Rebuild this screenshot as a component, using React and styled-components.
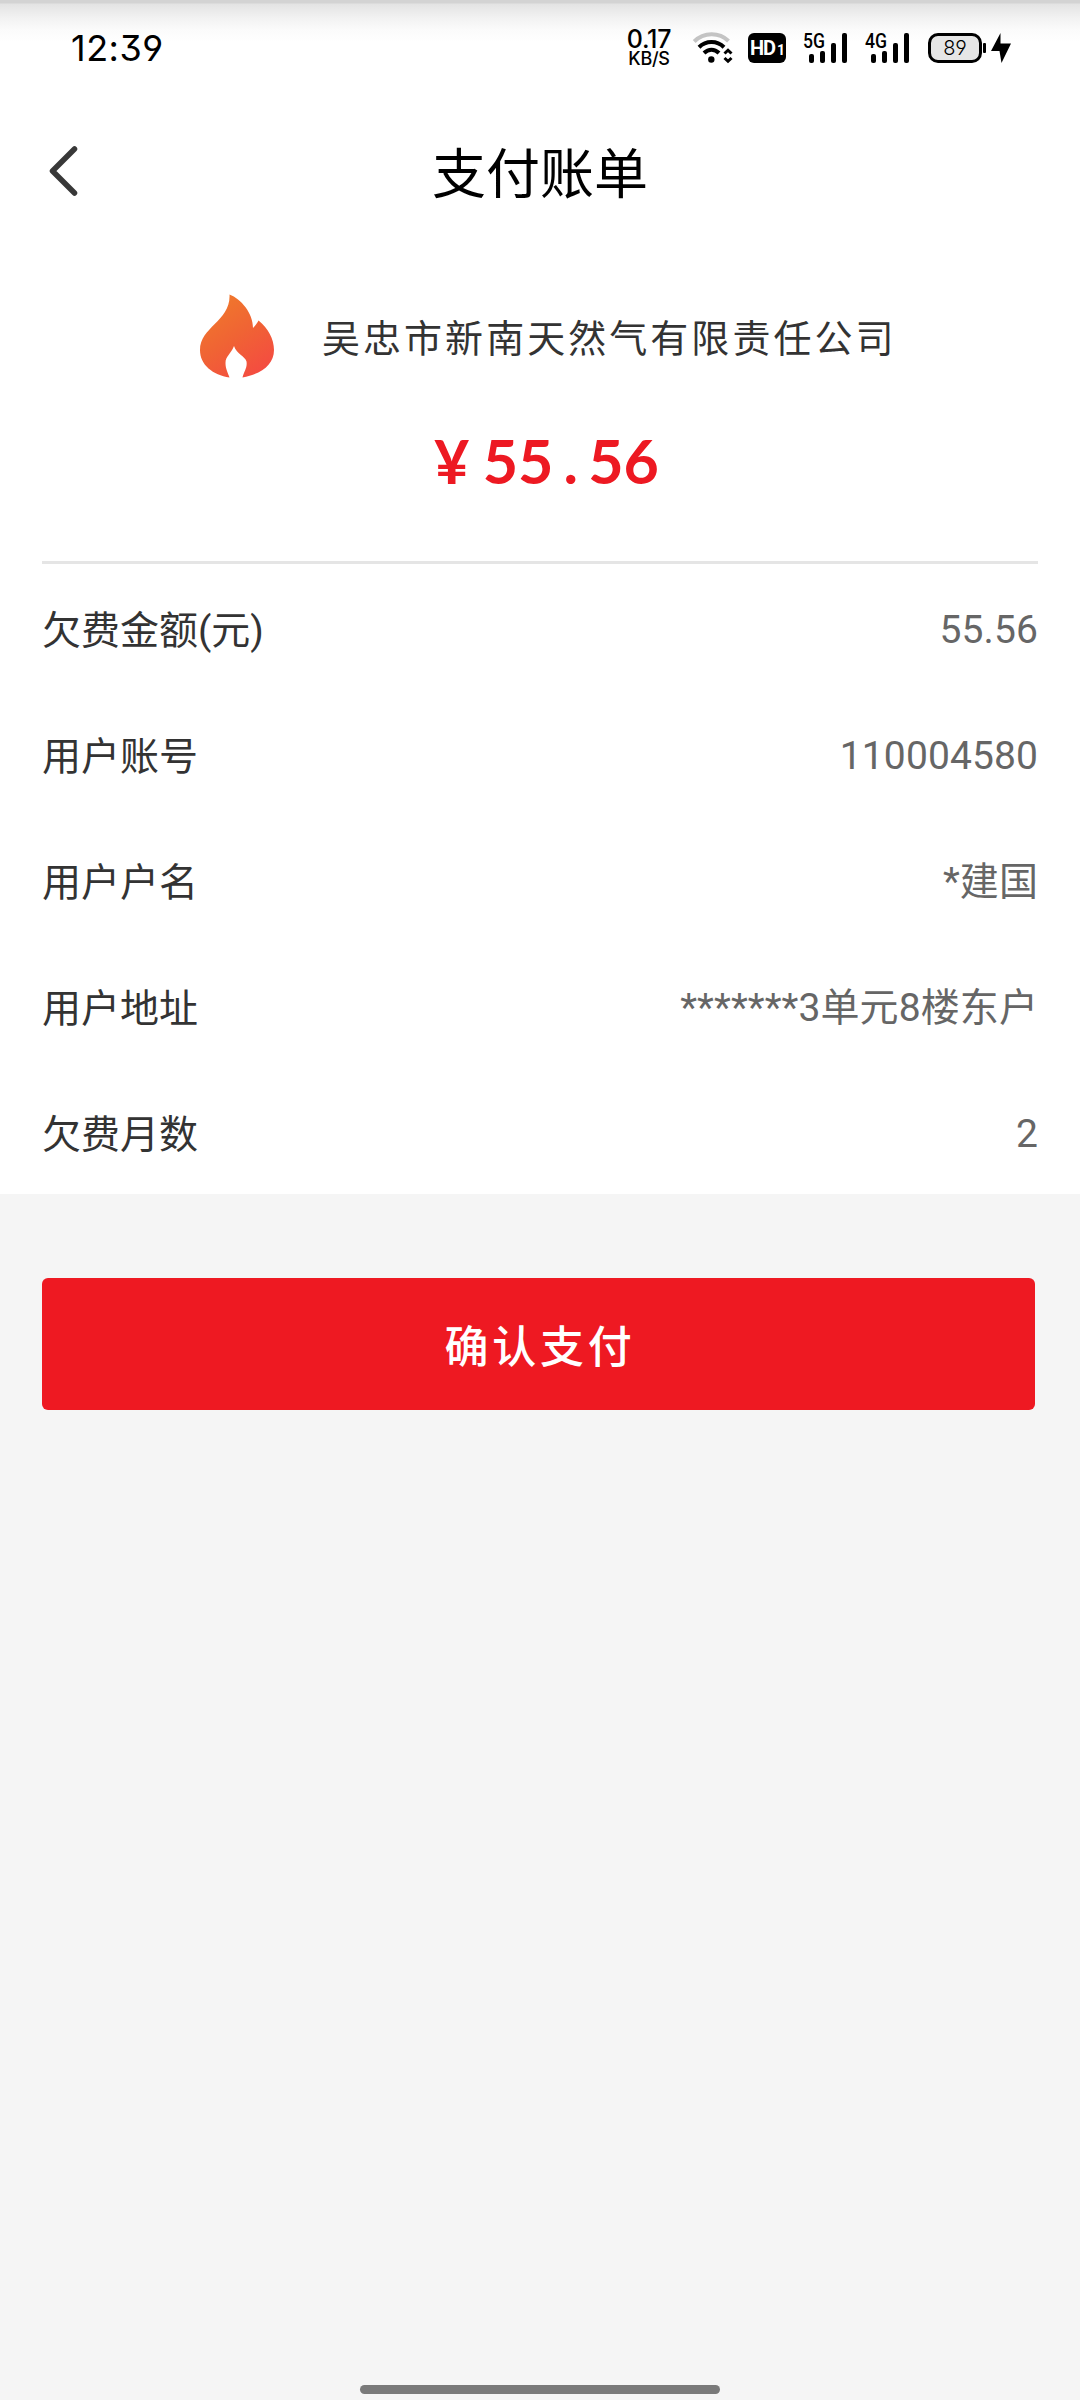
import React from "react";
import styled, { createGlobalStyle } from "styled-components";

const GlobalStyle = createGlobalStyle`
  * { box-sizing: border-box; }
  body { margin: 0; background: #f5f5f5; }
`;

const Page = styled.div`
  width: 1080px;
  height: 2400px;
  display: flex;
  flex-direction: column;
  background: #f5f5f5;
  color: #333;
  font-family: Roboto, "Noto Sans CJK SC", sans-serif;
`;

const Sheet = styled.div`
  height: 1194px;
  flex: none;
  background: linear-gradient(#d3d3d3 0, #d3d3d3 3px, #e3e3e3 4px, #f2f2f2 18px, #fbfbfb 30px, #fff 42px);
`;

const StatusBar = styled.header`
  height: 96px;
  padding: 0 69px 0 71px;
  display: flex;
  align-items: center;
  color: #000;
  font-family: Inter, sans-serif;
`;

const Clock = styled.div`
  flex: 1;
  font-size: 36px;
  line-height: 48px;
  letter-spacing: 0.5px;
  font-feature-settings: "ss01";
`;

const Speed = styled.div`
  width: 48px;
  margin-right: 20px;
  display: flex;
  flex-direction: column;
  align-items: center;
  white-space: nowrap;
  font-weight: 500;
`;

const SpeedValue = styled.span`
  font-size: 25px;
  line-height: 21px;
  letter-spacing: -0.3px;
`;

const SpeedUnit = styled.span`
  font-size: 18px;
  line-height: 17px;
  letter-spacing: -0.3px;
`;

const StatusIcon = styled.svg`
  display: block;
  flex: none;
  overflow: visible;
  margin-right: ${(p) => p.$gap || 0}px;
`;

const HdBadge = styled.div`
  width: 38px;
  height: 30px;
  margin-right: 18px;
  display: flex;
  align-items: baseline;
  justify-content: center;
  border-radius: 6px;
  background: #000;
  color: #fff;
  font: 700 20px/30px Roboto, sans-serif;
  letter-spacing: -1px;
`;

const HdIndex = styled.span`
  font-size: 14px;
  margin-left: 2px;
`;

const Battery = styled.div`
  width: 54px;
  height: 30px;
  border: 3px solid #000;
  border-radius: 10px;
  background: #e6e6e6;
  text-align: center;
  font-size: 20px;
  line-height: 25px;
  font-weight: 300;
  font-feature-settings: "ss01";
`;

const BatteryTip = styled.div`
  width: 3px;
  height: 10px;
  margin: 0 5px 0 1px;
  border-radius: 1px;
  background: #000;
`;

const NavBar = styled.nav`
  height: 152px;
  padding: 0 49px;
  display: grid;
  grid-template-columns: 60px 1fr 60px;
  align-items: center;
`;

const BackButton = styled.button`
  border: 0;
  padding: 0 0 2px;
  background: none;
  display: flex;
`;

const Title = styled.h1`
  margin: 0;
  padding-top: 7px;
  text-align: center;
  font-size: 54px;
  line-height: 80px;
  font-weight: 400;
  color: #000;
`;

const Summary = styled.section`
  height: 316px;
  margin: 0 42px;
  padding-top: 43px;
  border-bottom: 3px solid #e5e5e5;
`;

const Payee = styled.div`
  height: 90px;
  padding-left: 157px;
  display: flex;
  align-items: center;
`;

const PayeeName = styled.div`
  margin-left: 47px;
  padding-top: 6px;
  font-size: 38px;
  line-height: 56px;
  letter-spacing: 3.04px;
  white-space: nowrap;
`;

const Amount = styled.div`
  margin-top: 44px;
  padding-left: 392px;
  display: flex;
  color: #ed1922;
  font: 700 61px/72px Lato, sans-serif;
`;

const AmountGlyph = styled.span`
  width: 35.2px;
  margin-right: ${(p) => (p.$currency ? 13.5 : 0)}px;
  text-align: center;
`;

const Details = styled.dl`
  margin: 0;
  padding: 3px 42px 0;
`;

const DetailRow = styled.div`
  height: 126px;
  display: flex;
  align-items: center;
  justify-content: space-between;
  font-size: 39px;
  line-height: 56px;
`;

const DetailLabel = styled.dt`
  padding-top: 1px;
  color: #333;
`;

const DetailValue = styled.dd`
  margin: 0;
  letter-spacing: 0.1px;
  color: #666;
`;

const ConfirmButton = styled.button`
  width: 993px;
  height: 132px;
  margin: 84px 0 0 42px;
  padding: 0 0 0 3px;
  flex: none;
  border: 0;
  border-radius: 6px;
  background: #ee1922;
  color: #fff;
  font: 500 44px/64px "Noto Sans CJK SC", sans-serif;
  letter-spacing: 3.8px;
`;

const HomeIndicator = styled.div`
  width: 360px;
  height: 9px;
  margin: auto auto 6px;
  border-radius: 5px;
  background: #7a7a7a;
`;

const details = [
  ["欠费金额(元)", "55.56"],
  ["用户账号", "110004580"],
  ["用户户名", "*建国"],
  ["用户地址", "*******3单元8楼东户"],
  ["欠费月数", "2"],
];

const WifiIcon = () => (
  <StatusIcon $gap={16} width="39" height="30" viewBox="0 0 39 30" fill="none" stroke="#000" strokeWidth="4">
    <path d="M1.2 8.5C11-1 26-1 35.500 8" stroke="#c4c4c4" />
    <path d="M6 14.200C13 7.400 24 7.400 31 14.200" />
    <path d="M11 20C15.500 15.600 21.500 15.600 26 20" />
    <circle cx="18.300" cy="26.500" r="3.200" fill="#000" stroke="none" />
    <path d="M31.500 20.500L35 17.200L38.500 20.500M31.500 25L35 28.300L38.500 25" strokeWidth="3" />
  </StatusIcon>
);

const SignalIcon = ({ label, gap }) => (
  <StatusIcon $gap={gap} width="44" height="30" viewBox="0 0 44 30">
    <text x="-1" y="14.500" fontFamily="Roboto, sans-serif" fontSize="20" fontWeight="500" textLength="22" lengthAdjust="spacingAndGlyphs">{label}</text>
    <rect x="5" y="21" width="5" height="9" rx="2" />
    <rect x="16" y="18" width="5" height="12" rx="2" />
    <rect x="27" y="10" width="5" height="20" rx="2" />
    <rect x="38" y="0" width="5" height="30" rx="2" />
  </StatusIcon>
);

const FlameIcon = () => (
  <svg width="76" height="84" viewBox="0 0 76 84">
    <defs>
      <linearGradient id="flame" x1="0.2" y1="0" x2="0.8" y2="1">
        <stop offset="0" stopColor="#f07a2b" />
        <stop offset="0.5" stopColor="#f06334" />
        <stop offset="1" stopColor="#f44a42" />
      </linearGradient>
    </defs>
    <path
      fill="url(#flame)"
      d="M30.500 0.500C42 5 54 19 54 34C56.500 31 58.500 29 59.500 26.500C69 34 75 45 75 56C75 71 62 80 43.500 83.500C45 77 48.500 74 47.500 67.500C46 62 37.500 60 35 52C32 60 26.500 62 26.500 69C26.500 75 29 79 30.500 83.500C14 81 1 71 1 56C1 33 32 27 30.500 0.500Z"
    />
  </svg>
);

export default function App() {
  return (
    <Page>
      <GlobalStyle />
      <Sheet>
        <StatusBar>
          <Clock>12:39</Clock>
          <Speed>
            <SpeedValue>0.17</SpeedValue>
            <SpeedUnit>KB/S</SpeedUnit>
          </Speed>
          <WifiIcon />
          <HdBadge>
            HD<HdIndex>1</HdIndex>
          </HdBadge>
          <SignalIcon label="5G" gap={18} />
          <SignalIcon label="4G" gap={18} />
          <Battery>89</Battery>
          <BatteryTip />
          <StatusIcon width="20" height="30" viewBox="0 0 20 30">
            <path d="M9.500 0L0 18H8.500L10.500 30L20 10.500H9.500Z" />
          </StatusIcon>
        </StatusBar>
        <NavBar>
          <BackButton aria-label="返回">
            <svg width="29" height="50" viewBox="0 0 29 50" fill="none" stroke="#383838" strokeWidth="5.500" strokeLinecap="round" strokeLinejoin="round">
              <path d="M25.500 3L3.500 25L25.500 47" />
            </svg>
          </BackButton>
          <Title>支付账单</Title>
        </NavBar>
        <Summary>
          <Payee>
            <FlameIcon />
            <PayeeName>吴忠市新南天然气有限责任公司</PayeeName>
          </Payee>
          <Amount>
            {[..."¥55.56"].map((glyph, i) => (
              <AmountGlyph key={i} $currency={i === 0}>{glyph}</AmountGlyph>
            ))}
          </Amount>
        </Summary>
        <Details>
          {details.map(([label, value]) => (
            <DetailRow key={label}>
              <DetailLabel>{label}</DetailLabel>
              <DetailValue>{value}</DetailValue>
            </DetailRow>
          ))}
        </Details>
      </Sheet>
      <ConfirmButton>确认支付</ConfirmButton>
      <HomeIndicator />
    </Page>
  );
}
